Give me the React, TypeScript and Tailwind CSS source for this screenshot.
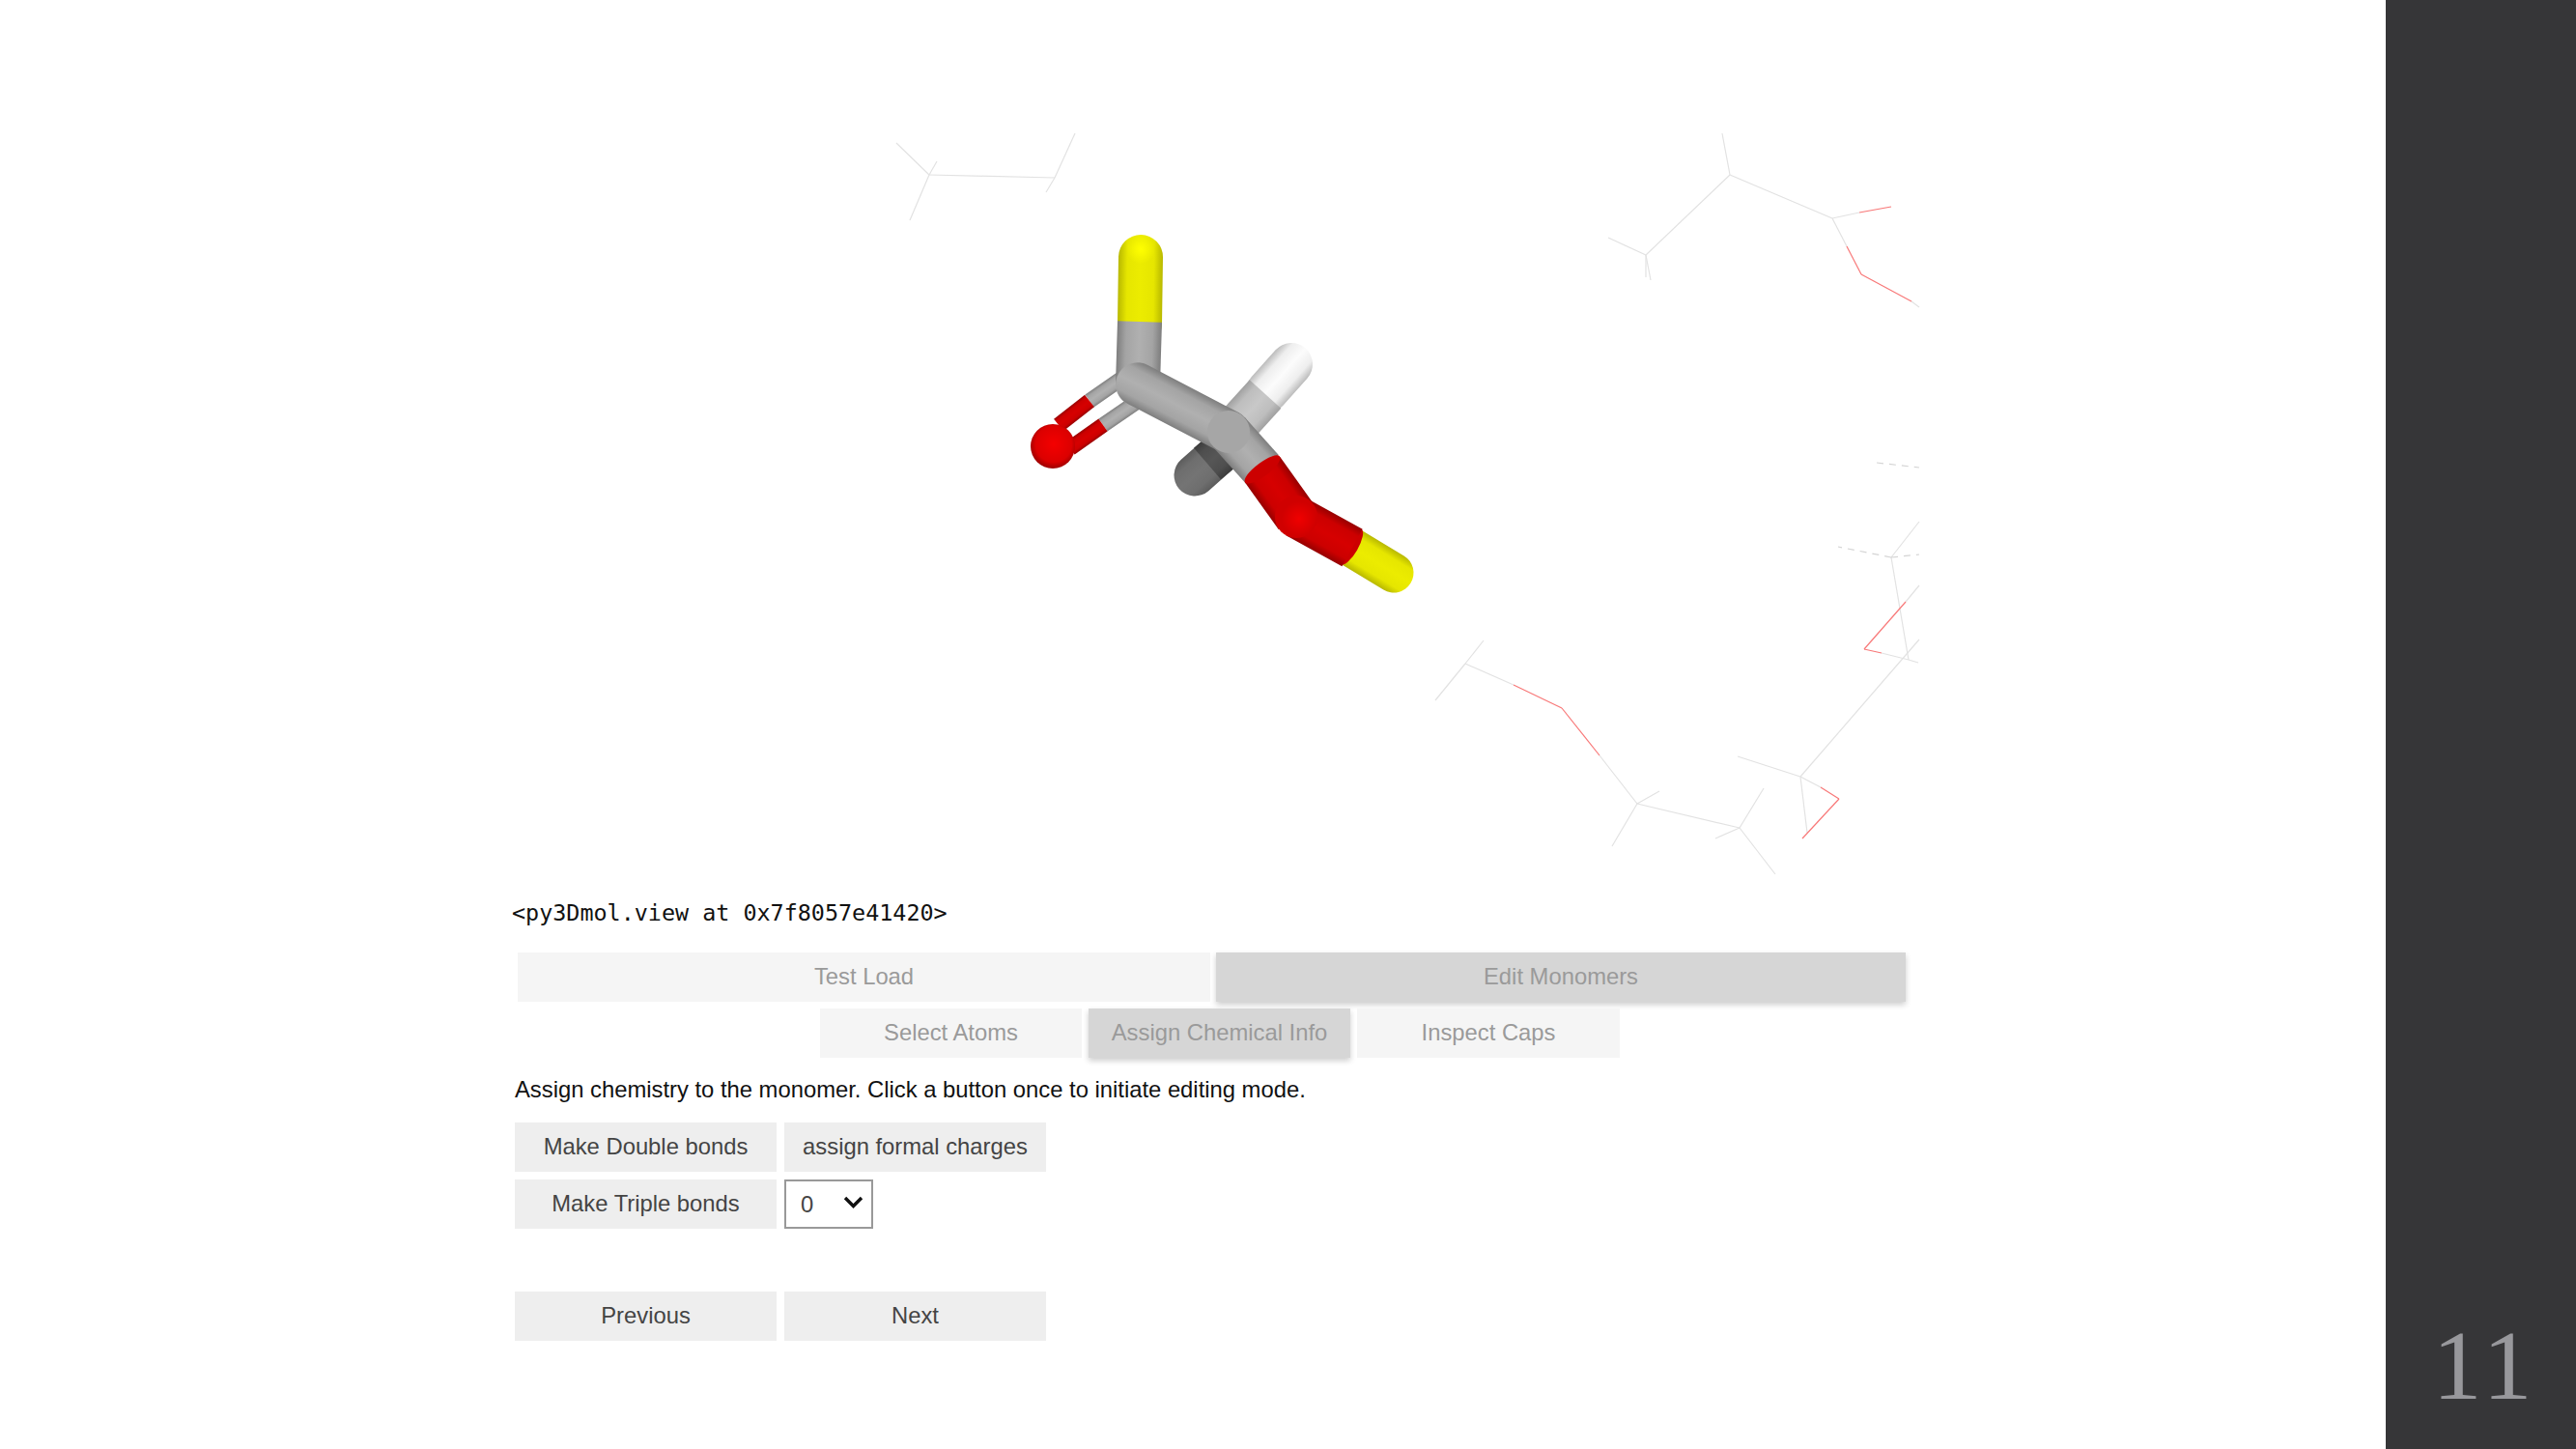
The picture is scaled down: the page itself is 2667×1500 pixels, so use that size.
import React from "react";

const sans = "font-['Liberation_Sans',Arial,sans-serif]";

type Seg = [number, number, number, number, string?];

// faint wireframe residues in the viewer, page coordinates
const wires: Seg[] = [
  [928, 148, 962, 181], [962, 181, 942, 228], [962, 181, 970, 167], [962, 181, 1092, 184],
  [1092, 184, 1113, 138], [1092, 184, 1083, 199],
  [1791, 181, 1783, 138], [1791, 181, 1897, 226], [1791, 181, 1704, 264], [1704, 264, 1665, 246],
  [1704, 264, 1704, 287], [1704, 264, 1709, 290], [1897, 226, 1925, 220], [1897, 226, 1912, 255],
  [1979, 312, 1987, 318],
  [1536, 663, 1517, 687], [1517, 687, 1486, 725], [1517, 687, 1567, 709], [1656, 782, 1695, 832],
  [1695, 832, 1718, 819], [1695, 832, 1669, 876], [1695, 832, 1801, 857], [1801, 857, 1826, 816],
  [1801, 857, 1776, 868], [1801, 857, 1838, 905],
  [1864, 804, 1799, 783], [1864, 804, 1885, 815], [1864, 804, 1871, 862], [1864, 804, 1987, 662],
  [1976, 683, 1986, 686], [1976, 683, 1948, 676], [1976, 683, 1958, 577], [1958, 577, 1987, 540],
  [1973, 623, 1987, 606],
];

const reds: Seg[] = [
  [1925, 220, 1958, 214], [1912, 255, 1927, 284], [1927, 284, 1979, 312],
  [1567, 709, 1617, 733], [1617, 733, 1656, 782],
  [1885, 815, 1904, 827], [1904, 827, 1866, 868],
  [1948, 676, 1930, 672], [1930, 672, 1973, 623],
];

const dashed: Seg[] = [
  [1943, 479, 1987, 484], [1958, 577, 1903, 566], [1958, 577, 1987, 574],
];

type BondProps = { id: string; x1: number; y1: number; x2: number; y2: number; w: number; stops: string[]; cap?: "round" | "butt" };

// cylinder drawn as a stroke with a gradient running across its axis
const Bond = ({ id, x1, y1, x2, y2, w, stops, cap = "round" }: BondProps) => {
  const dx = x2 - x1;
  const dy = y2 - y1;
  const len = Math.hypot(dx, dy);
  const nx = (-dy / len) * (w / 2);
  const ny = (dx / len) * (w / 2);
  return (
    <>
      <linearGradient id={id} gradientUnits="userSpaceOnUse" x1={x1 - nx} y1={y1 - ny} x2={x1 + nx} y2={y1 + ny}>
        <stop offset="0" stopColor={stops[0]} />
        <stop offset="0.2" stopColor={stops[1]} />
        <stop offset="0.5" stopColor={stops[2]} />
        <stop offset="0.8" stopColor={stops[1]} />
        <stop offset="1" stopColor={stops[0]} />
      </linearGradient>
      <line x1={x1} y1={y1} x2={x2} y2={y2} stroke={`url(#${id})`} strokeWidth={w} strokeLinecap={cap} />
    </>
  );
};

const gray = ["#7e7e7e", "#a4a4a4", "#b0b0b0"];
const yellow = ["#b8b800", "#e6e600", "#ecec00"];
const red = ["#960000", "#cc0000", "#d60000"];
const white = ["#bcbcbc", "#eeeeee", "#fcfcfc"];

const Viewer = () => (
  <svg viewBox="530 0 1460 920" className="block h-[920px] w-[1460px] blur-[0.5px]">
    <g strokeWidth="1.2" fill="none">
      {wires.map((s, i) => <line key={i} x1={s[0]} y1={s[1]} x2={s[2]} y2={s[3]} stroke="#e2e2e2" />)}
      {reds.map((s, i) => <line key={i} x1={s[0]} y1={s[1]} x2={s[2]} y2={s[3]} stroke="#f87878" />)}
      {dashed.map((s, i) => <line key={i} x1={s[0]} y1={s[1]} x2={s[2]} y2={s[3]} stroke="#d4d4d4" strokeDasharray="7 6" />)}
    </g>

    <defs>
      <radialGradient id="oSphere" cx="0.52" cy="0.45" r="0.58">
        <stop offset="0" stopColor="#f40000" />
        <stop offset="0.7" stopColor="#dc0000" />
        <stop offset="1" stopColor="#900000" />
      </radialGradient>
      <radialGradient id="oJoint">
        <stop offset="0" stopColor="#f00000" />
        <stop offset="1" stopColor="#f0000000" />
      </radialGradient>
      <radialGradient id="sTip" cx="0.5" cy="0.5" r="0.5">
        <stop offset="0" stopColor="#ffff00" />
        <stop offset="1" stopColor="#ffff0000" />
      </radialGradient>
    </defs>

    {/* far hydrogen, in shadow */}
    <Bond id="hd1" x1={1237} y1={492} x2={1262} y2={470} w={43} stops={["#5c5c5c", "#6e6e6e", "#747474"]} />
    <Bond id="hd2" x1={1250} y1={480} x2={1285} y2={450} w={43} stops={["#3c3c3c", "#4e4e4e", "#565656"]} cap="butt" />

    {/* near hydrogen */}
    <Bond id="h2" x1={1337} y1={377} x2={1312} y2={405} w={44} stops={white} />
    <Bond id="h1" x1={1310} y1={408} x2={1270} y2={452} w={44} stops={["#a0a0a0", "#bebebe", "#c8c8c8"]} cap="butt" />

    {/* C=O double bond */}
    <Bond id="d1" x1={1164} y1={390} x2={1128} y2={415} w={16} stops={gray} cap="butt" />
    <Bond id="d2" x1={1128} y1={415} x2={1096} y2={440} w={16} stops={red} cap="butt" />
    <Bond id="d3" x1={1177} y1={416} x2={1142} y2={440} w={16} stops={gray} cap="butt" />
    <Bond id="d4" x1={1142} y1={440} x2={1108} y2={464} w={16} stops={red} cap="butt" />
    <circle cx="1090" cy="462" r="23" fill="url(#oSphere)" />

    {/* backbone */}
    <Bond id="s1" x1={1181} y1={266} x2={1180} y2={335} w={46} stops={yellow} />
    <circle cx="1181" cy="258" r="15" fill="url(#sTip)" />
    <Bond id="s1g" x1={1180} y1={333} x2={1178} y2={398} w={46} stops={gray} cap="butt" />
    <circle cx="1178" cy="398" r="23" fill="#a6a6a6" />
    <Bond id="cc" x1={1178} y1={398} x2={1272} y2={447} w={45} stops={gray} />
    <Bond id="cog" x1={1272} y1={447} x2={1307} y2={486} w={45} stops={gray} cap="butt" />
    <circle cx="1272" cy="447" r="22" fill="#a6a6a6" />
    <Bond id="s2" x1={1400} y1={567} x2={1443} y2={593} w={41} stops={yellow} />
    <ellipse cx="1399" cy="566" rx="7" ry="21" transform="rotate(30 1399 566)" fill="#cc0000" />
    <Bond id="or2" x1={1342} y1={535} x2={1400} y2={567} w={44} stops={red} cap="butt" />
    <Bond id="or1" x1={1307} y1={486} x2={1342} y2={535} w={45} stops={red} cap="butt" />
    <ellipse cx="1307" cy="486" rx="22.5" ry="7" transform="rotate(-37 1307 486)" fill="#cc0000" />
    <circle cx="1342" cy="535" r="22" fill="#d00000" />
    <circle cx="1345" cy="537" r="18" fill="url(#oJoint)" />
  </svg>
);

const Tab = ({ label, active, className }: { label: string; active?: boolean; className: string }) => (
  <div
    className={`flex h-[51px] items-center justify-center pb-[2px] text-[23.8px] text-[#9a9a9a] ${
      active ? "bg-[#d6d6d6] shadow-[0_3px_6px_rgba(0,0,0,0.2)]" : "bg-[#f5f5f5]"
    } ${className}`}
  >
    {label}
  </div>
);

const Btn = ({ label }: { label: string }) => (
  <button className="flex h-[51px] w-[271px] items-center justify-center bg-[#eeeeee] pb-[2px] text-[23.8px] text-[#444444]">
    {label}
  </button>
);

const App = () => {
  return (
    <div className={`flex h-screen w-full overflow-hidden bg-white ${sans}`}>
      <main className="flex-1 pl-[530px]">
        <Viewer />
        <pre className="mt-[10px] h-[30px] font-['DejaVu_Sans_Mono',monospace] text-[23.4px] leading-[30px] text-[#111111]">
          {"<py3Dmol.view at 0x7f8057e41420>"}
        </pre>
        <div className="ml-[6px] mt-[26px] flex w-[1444px] gap-[6px]">
          <Tab label="Test Load" className="w-[717px]" />
          <Tab label="Edit Monomers" active className="w-[714px]" />
        </div>
        <div className="ml-[319px] mt-[7px] flex gap-[7px]">
          <Tab label="Select Atoms" className="w-[271px]" />
          <Tab label="Assign Chemical Info" active className="w-[271px]" />
          <Tab label="Inspect Caps" className="w-[272px]" />
        </div>
        <p className="ml-[3px] mt-[18px] text-[23.8px] leading-[30px] text-[#111111]">
          Assign chemistry to the monomer. Click a button once to initiate editing mode.
        </p>
        <div className="ml-[3px] mt-[19px] flex gap-[8px]">
          <Btn label="Make Double bonds" />
          <Btn label="assign formal charges" />
        </div>
        <div className="ml-[3px] mt-[8px] flex gap-[8px]">
          <Btn label="Make Triple bonds" />
          <div className="relative h-[51px] w-[92px]">
            <select className="h-full w-full appearance-none border-2 border-[#999999] bg-white pl-[15px] text-[23.8px] text-[#444444]">
              <option>0</option>
            </select>
            <svg viewBox="0 0 21 13" className="pointer-events-none absolute left-[61px] top-[17px] h-[13px] w-[21px]">
              <path d="M2 2l8.5 8.5L19 2" fill="none" stroke="#111" strokeWidth="3.4" />
            </svg>
          </div>
        </div>
        <div className="ml-[3px] mt-[65px] flex gap-[8px]">
          <Btn label="Previous" />
          <Btn label="Next" />
        </div>
      </main>
      <aside className="flex w-[197px] shrink-0 items-end justify-center bg-[#363638] pb-[35px] pl-[8px]">
        <span className="font-['Liberation_Serif',serif] text-[102px] leading-none tracking-[5px] text-[#98989c]">11</span>
      </aside>
    </div>
  );
};

export default App;
